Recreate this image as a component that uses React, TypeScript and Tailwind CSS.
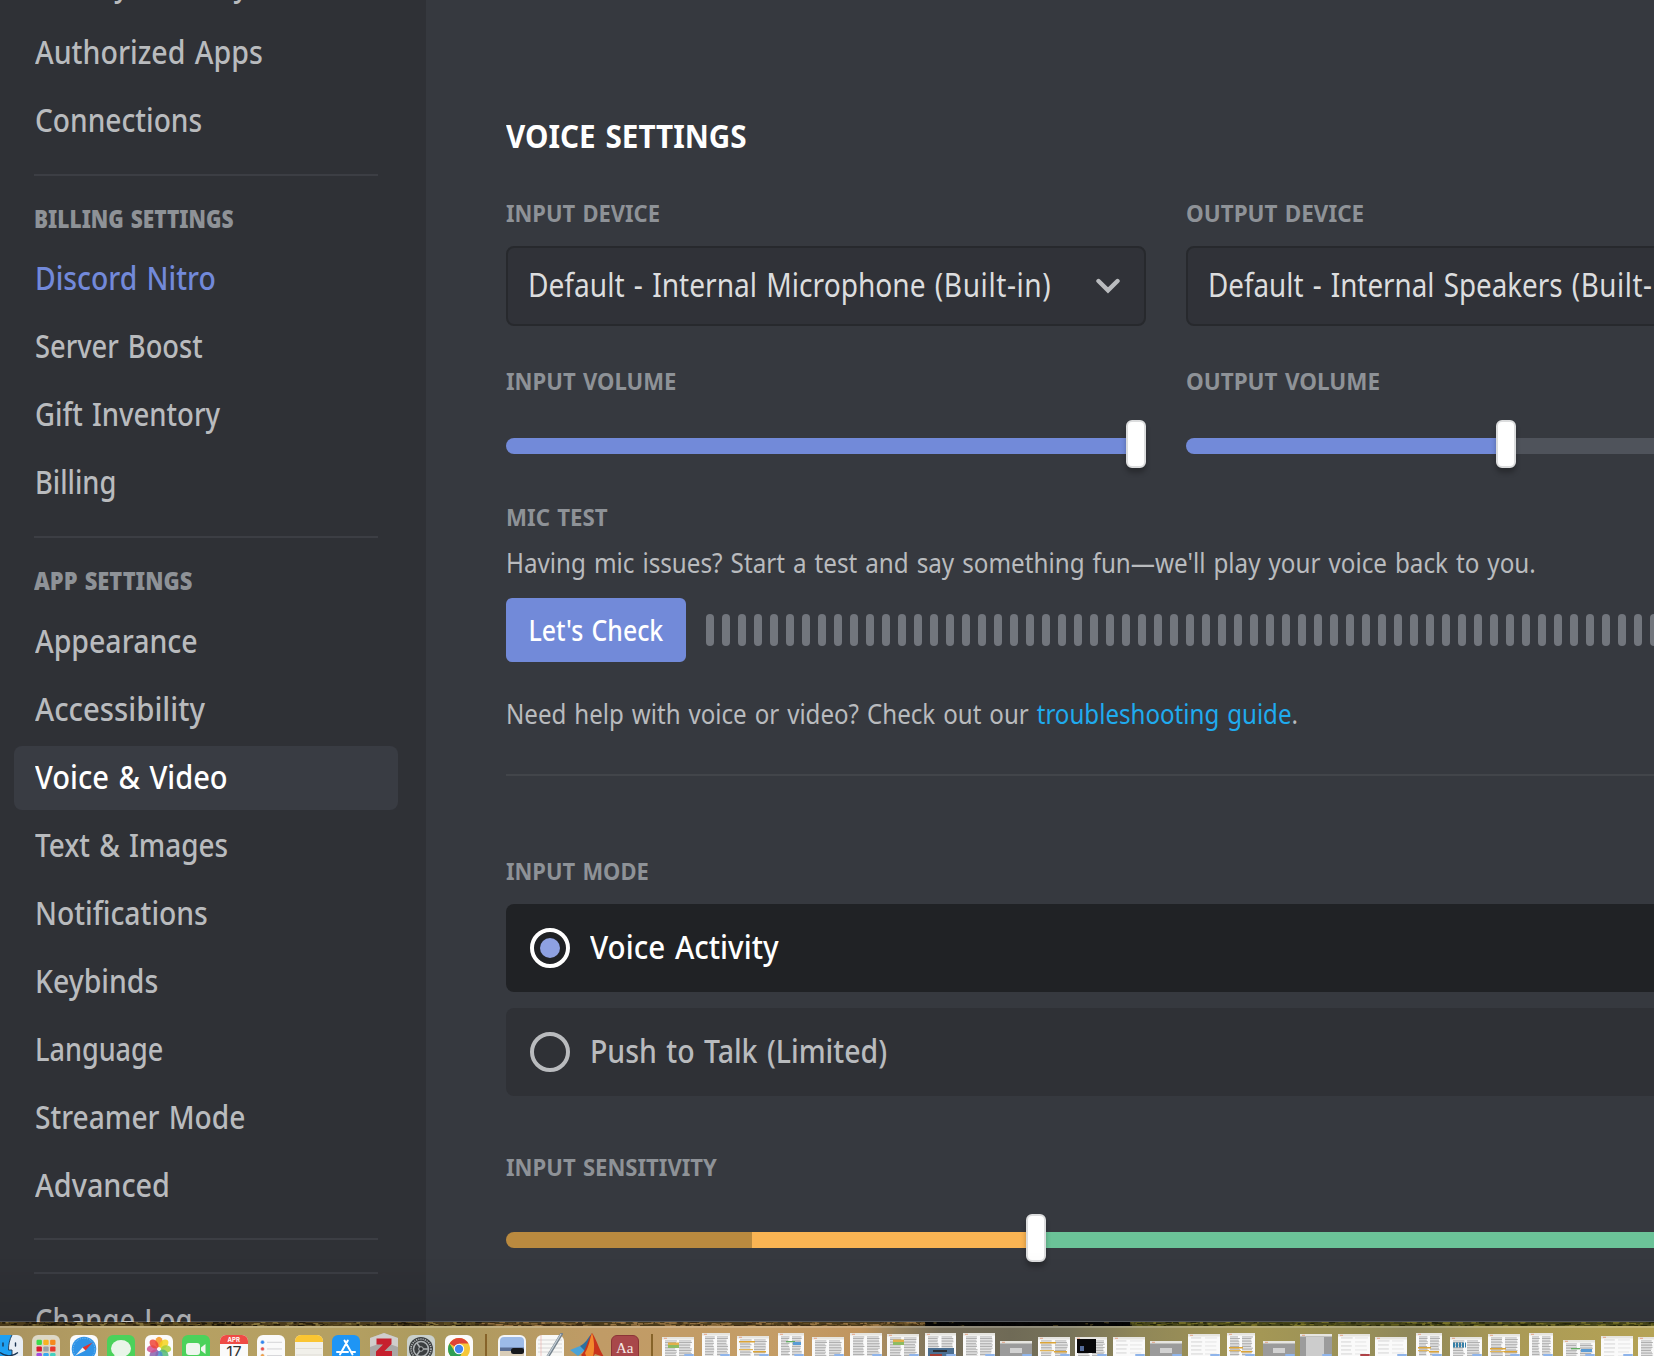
import { useLayoutEffect, useRef, useState, type ReactNode } from "react";

/* Text condensed horizontally so that its advance equals `width`. */
function Fit({ width, center, children }: { width: number; center?: boolean; children: ReactNode }) {
  const ref = useRef<HTMLSpanElement>(null);
  const [scale, setScale] = useState(0.9);
  useLayoutEffect(() => {
    if (ref.current) setScale(width / ref.current.offsetWidth);
  }, [width]);
  return (
    <span
      ref={ref}
      className={`inline-block whitespace-nowrap [word-spacing:0.07em] ${center ? "origin-center" : "origin-left"}`}
      style={{ transform: `scaleX(${scale})` }}
    >
      {children}
    </span>
  );
}

/* ---------- Sidebar ---------- */

function Item({ label, width, tone = "normal" }: { label: string; width: number; tone?: "normal" | "nitro" | "active" }) {
  const tones = {
    normal: "text-[#b9bbbe]",
    nitro: "text-[#7289da]",
    active: "bg-[#393c43] text-white",
  };
  return (
    <div className={`mb-1 flex h-16 w-[384px] shrink-0 items-center rounded-lg pb-[3px] pl-[20.5px] text-[32px] font-medium ${tones[tone]}`}>
      <Fit width={width}>{label}</Fit>
    </div>
  );
}

function Rule() {
  return <div className="ml-5 h-0.5 w-[344px] shrink-0 bg-[#3c3e44]" />;
}

function Sidebar() {
  return (
    <nav className="flex w-[426px] shrink-0 flex-col bg-[#2f3136] pl-[14px]">
      <div className="-mt-[47px] flex flex-col">
        <Item label="Privacy & Safety" width={213} />
        <Item label="Authorized Apps" width={227.5} />
        <Item label="Connections" width={167} />
      </div>
      <div className="mt-[17px]">
        <Rule />
      </div>
      <h2 className="flex h-[71px] shrink-0 items-center pt-[14px] pl-5 text-2xl font-black text-[#8e9297]">
        <Fit width={199.5}>BILLING SETTINGS</Fit>
      </h2>
      <Item label="Discord Nitro" width={180.5} tone="nitro" />
      <Item label="Server Boost" width={168} />
      <Item label="Gift Inventory" width={185} />
      <Item label="Billing" width={81} />
      <div className="mt-[17px]">
        <Rule />
      </div>
      <h2 className="flex h-[72px] shrink-0 items-center pt-[14px] pl-5 text-2xl font-black text-[#8e9297]">
        <Fit width={158.500}>APP SETTINGS</Fit>
      </h2>
      <Item label="Appearance" width={163} />
      <Item label="Accessibility" width={169.5} />
      <Item label="Voice & Video" width={192.5} tone="active" />
      <Item label="Text & Images" width={193.500} />
      <Item label="Notifications" width={172.500} />
      <Item label="Keybinds" width={123.5} />
      <Item label="Language" width={128.5} />
      <Item label="Streamer Mode" width={210} />
      <Item label="Advanced" width={135} />
      <div className="mt-4 flex flex-col gap-8">
        <Rule />
        <Rule />
      </div>
      <div className="mt-[15px]">
        <Item label="Change Log" width={157.500} />
      </div>
    </nav>
  );
}

/* ---------- Voice settings ---------- */

function Label({ width, children }: { width: number; children: string }) {
  return (
    <h3 className="flex h-8 items-center text-2xl font-bold text-[#8e9297]">
      <Fit width={width}>{children}</Fit>
    </h3>
  );
}

function Select({ device, width }: { device: string; width: number }) {
  return (
    <div className="mt-[17px] flex h-20 w-[640px] items-center rounded-lg border-2 border-[#27292d] bg-[#303238] pr-6 pb-[3px] pl-5 text-[32px] text-[#dcddde]">
      <div className="w-0 flex-1">
        <Fit width={width}>
          Default - Internal {device} <span className="tracking-[0.02em]">(Built-in)</span>
        </Fit>
      </div>
      <svg width="24" height="16" viewBox="0 0 24 16" className="mt-[2px] shrink-0">
        <path d="M2.5 3 L12 12.3 L21.5 3" fill="none" stroke="#b9bbbe" strokeWidth="4.4" strokeLinecap="round" />
      </svg>
    </div>
  );
}

function Thumb() {
  return <div className="z-10 h-12 w-5 shrink-0 rounded-md border-2 border-[#dcddde] bg-white shadow-[0_5px_5px_rgba(0,0,0,0.25)]" />;
}

function VolumeSlider({ full }: { full?: boolean }) {
  return (
    <div className="mt-[23px] flex h-12 w-[640px]">
      <div className={`mt-[18px] h-4 rounded-l-full bg-[#728ad9] ${full ? "w-[620px]" : "w-[310px]"}`} />
      <Thumb />
      {!full && <div className="mt-[18px] h-4 w-[310px] rounded-r-full bg-[#4f535b]" />}
    </div>
  );
}

function RadioRow({ label, width, active }: { label: string; width: number; active?: boolean }) {
  return (
    <div className={`flex h-[88px] w-[1320px] items-center gap-5 rounded-lg pl-6 ${active ? "bg-[#202225] text-white" : "bg-[#2f3136] text-[#b9bbbe]"}`}>
      <div className="flex size-10 items-center justify-center rounded-full border-4 border-current">
        {active && <div className="size-5 rounded-full bg-[#8ea1e1]" />}
      </div>
      <div className="pb-[3px] text-[32px] font-medium">
        <Fit width={width}>{label}</Fit>
      </div>
    </div>
  );
}

function Content() {
  return (
    <main className="flex min-w-0 flex-1 flex-col overflow-hidden bg-[#36393f] pt-[116px] pl-20">
      <h1 className="flex h-10 items-center text-[32px] font-bold text-white">
        <Fit width={241}>VOICE SETTINGS</Fit>
      </h1>
      <div className="mt-[41px] flex w-[1320px] gap-10">
        <section className="w-[640px]">
          <Label width={153.500}>INPUT DEVICE</Label>
          <Select device="Microphone" width={523.5} />
          <div className="mt-[39px]">
            <Label width={170}>INPUT VOLUME</Label>
          </div>
          <VolumeSlider full />
        </section>
        <section className="w-[640px]">
          <Label width={178.5}>OUTPUT DEVICE</Label>
          <Select device="Speakers" width={478.500} />
          <div className="mt-[39px]">
            <Label width={194.5}>OUTPUT VOLUME</Label>
          </div>
          <VolumeSlider />
        </section>
      </div>

      <div className="mt-[33px]">
        <Label width={102}>MIC TEST</Label>
      </div>
      <p className="mt-[9px] flex h-10 items-center pb-px text-[28px] text-[#b9bbbe]">
        <Fit width={1030}>Having mic issues? Start a test and say something fun—we'll play your voice back to you.</Fit>
      </p>
      <div className="mt-4 flex w-[1320px] items-center gap-5">
        <button className="flex h-16 w-[180px] shrink-0 items-center justify-center rounded-md bg-[#728ad9] text-[28px] font-medium text-white">
          <Fit width={135} center>
            Let's Check
          </Fit>
        </button>
        <div className="flex gap-2">
          {Array.from({ length: 64 }, (_, i) => (
            <div key={i} className="h-8 w-2 shrink-0 rounded-full bg-[#72767d]" />
          ))}
        </div>
      </div>
      <p className="mt-[31px] flex h-[41px] items-center pb-px text-[28px] text-[#b9bbbe]">
        <Fit width={792}>
          Need help with voice or video? Check out our <a className="text-[#1fabee]">troubleshooting guide</a>.
        </Fit>
      </p>
      <div className="mt-10 h-0.5 w-[1320px] bg-[#42454a]" />

      <div className="mt-[79px]">
        <Label width={142.5}>INPUT MODE</Label>
      </div>
      <div className="mt-[17px] flex flex-col gap-4">
        <RadioRow label="Voice Activity" width={188.5} active />
        <RadioRow label="Push to Talk (Limited)" width={297} />
      </div>

      <div className="mt-[55px]">
        <Label width={210.5}>INPUT SENSITIVITY</Label>
      </div>
      <div className="mt-[31px] flex h-12 w-[1320px]">
        <div className="mt-[18px] h-4 w-[246px] rounded-l-full bg-[#ba8a3f]" />
        <div className="mt-[18px] h-4 w-[274px] bg-[#fab453]" />
        <Thumb />
        <div className="mt-[18px] h-4 flex-1 rounded-r-full bg-[#6bc398]" />
      </div>
    </main>
  );
}

/* ---------- Wallpaper strip and dock ---------- */

function rng(seed: number) {
  let s = seed;
  return () => ((s = (s * 16807) % 2147483647) / 2147483647);
}

function Wallpaper() {
  const rand = rng(77);
  const patches = Array.from({ length: 900 }, (_, i) => {
    const x = rand() * 1654;
    const dark = x > 925 && x < 1130;
    const olive = x >= 1130;
    const palette = olive
      ? ["#5c5a1c", "#3a3a10", "#80792c", "#1f2008"]
      : x < 480
        ? ["#5b4c20", "#2a220e", "#8b7940", "#181205"]
        : ["#6b5228", "#8c6d3c", "#3a2812", "#a07c4a"];
    const c = dark ? (rand() > 0.06 ? "#050505" : "#4a4020") : palette[Math.floor(rand() * 4)];
    return <rect key={i} x={x} y={Math.floor(rand() * 4)} width={2 + rand() * 5} height={1 + rand()} fill={c} opacity="0.8" />;
  });
  return (
    <svg className="block h-1 w-full shrink-0" width="1654" height="4" viewBox="0 0 1654 4">
      <rect width="930" height="4" fill="#4a3a1a" />
      <rect x="925" width="205" height="4" fill="#060606" />
      <rect x="1130" width="524" height="4" fill="#45441a" />
      {patches}
    </svg>
  );
}

const APP = "block size-7 shrink-0 mt-[7px]";

function Tile({ fill }: { fill: string }) {
  return <rect width="28" height="28" rx="6" fill={fill} />;
}

function Apps() {
  const petals = ["#f6931e", "#f4d21f", "#a8cf38", "#52b878", "#4b8fd0", "#8a62ae", "#cf4f8e", "#ee4438"];
  const pads = ["#3ddc4c", "#f7b322", "#f58a1f", "#d9182d", "#9aa0a6", "#e8382f", "#a34be0", "#36a9f0", "#43d0c0"];
  return [
    <svg className={APP} viewBox="0 0 28 28">
      <Tile fill="#e8eef5" />
      <path d="M6 0H17C14.500 5 13.500 9 13.500 15H17V28H6A6 6 0 0 1 0 22V6A6 6 0 0 1 6 0Z" fill="#1ea0f2" />
      <path d="M17 0C14.500 5 13.500 9 13.500 15H17V20" fill="none" stroke="#1c3553" strokeWidth="0.900" />
      <path d="M8 8V11M20.500 8V11" stroke="#1c3553" strokeWidth="1.400" strokeLinecap="round" />
      <path d="M5 17.500Q14 24 23 17.500" fill="none" stroke="#1c3553" strokeWidth="1.200" />
    </svg>,
    <svg className={APP} viewBox="0 0 28 28">
      <Tile fill="#ddd8c6" />
      {pads.map((c, i) => (
        <rect key={i} x={4.5 + (i % 3) * 6.8} y={4.8 + Math.floor(i / 3) * 6.6} width="5.400" height="5.200" rx="1.200" fill={c} />
      ))}
    </svg>,
    <svg className={APP} viewBox="0 0 28 28">
      <Tile fill="#fbfbfb" />
      <circle cx="14" cy="14" r="12.300" fill="#2f93e6" />
      <circle cx="14" cy="14" r="10.800" fill="none" stroke="#a8d4f7" strokeWidth="1" strokeDasharray="0.500 1.300" />
      <path d="M22.500 7.500L15.500 15.500L12.500 12.500Z" fill="#e5322c" />
      <path d="M5.500 20.500L15.500 15.500L12.500 12.500Z" fill="#f4f4f4" />
    </svg>,
    <svg className={APP} viewBox="0 0 28 28">
      <Tile fill="#4bd25b" />
      <ellipse cx="14" cy="13.500" rx="10" ry="8.500" fill="#e9f5e9" />
      <path d="M8 19L6 24L12 21.500Z" fill="#e9f5e9" />
    </svg>,
    <svg className={APP} viewBox="0 0 28 28">
      <Tile fill="#fbfbfb" />
      {petals.map((c, i) => (
        <ellipse key={i} cx="14" cy="7" rx="3.700" ry="5.200" fill={c} opacity="0.850" transform={`rotate(${i * 45} 14 14)`} />
      ))}
    </svg>,
    <svg className={APP} viewBox="0 0 28 28">
      <Tile fill="#4bd25b" />
      <rect x="4" y="8" width="14" height="12" rx="3" fill="#eef7ee" />
      <path d="M19 12.500L23.500 9V19L19 15.500Z" fill="#eef7ee" />
    </svg>,
    <div className="mt-[7px] flex h-7 w-7 shrink-0 flex-col items-center overflow-hidden rounded-md bg-[#fafafa] font-['Inter']">
      <div className="h-[9px] w-full bg-[#ef4b45] text-center text-[6px] leading-[9px] font-bold text-white">APR</div>
      <div className="text-[16px] leading-[17px] tracking-tight text-[#333333]">17</div>
    </div>,
    <svg className={APP} viewBox="0 0 28 28">
      <Tile fill="#fafafa" />
      {["#2f86f0", "#e8504a", "#f0a04a"].map((c, i) => (
        <g key={c}>
          <circle cx="5.500" cy={7.2 + i * 6.7} r="1.900" fill={c} stroke="#dfe5ee" strokeWidth="0.500" />
          <rect x="10" y={6.8 + i * 6.7} width="15" height="0.900" fill="#cfcfd2" />
        </g>
      ))}
    </svg>,
    <svg className={APP} viewBox="0 0 28 28">
      <Tile fill="#f1f0ea" />
      <path d="M0 7V6A6 6 0 0 1 6 0H22A6 6 0 0 1 28 6V7Z" fill="#fac532" />
      <path d="M1 13.500H27M1 20H27" stroke="#d8d6ce" strokeWidth="0.700" />
    </svg>,
    <svg className={APP} viewBox="0 0 28 28">
      <Tile fill="#1e95f5" />
      <path d="M15.800 5.500L8 19.500M12.500 5.500L20.500 19.500M5 17H16M19.500 17H23" fill="none" stroke="#ffffff" strokeWidth="2" strokeLinecap="round" />
    </svg>,
    <svg className="mt-[5px] block h-[30px] w-7 shrink-0" viewBox="0 0 28 30">
      <path d="M14 0L28 5V25L14 30L0 25V5Z" fill="#aaa8a6" />
      <path d="M14 0L28 5V14L14 9L0 14V5Z" fill="#d0cecc" />
      <path d="M6.500 5.500H21.500V11L14.500 18H22V24H6V18.500L13 11.500H6.500Z" fill="#c6202e" />
    </svg>,
    <svg className={APP} viewBox="0 0 28 28">
      <Tile fill="#c9d0cc" />
      <circle cx="14" cy="14" r="12" fill="#3b3e40" />
      <circle cx="14" cy="14" r="10" fill="none" stroke="#b9bdbe" strokeWidth="1.500" strokeDasharray="1.200 1" />
      <circle cx="14" cy="14" r="7.500" fill="none" stroke="#aeb2b4" strokeWidth="1.500" />
      <path d="M14 14H21M14 14L10 8M14 14L10 20" stroke="#aeb2b4" strokeWidth="1.500" />
      <circle cx="14" cy="14" r="2.300" fill="#2b2d2f" stroke="#aeb2b4" />
    </svg>,
    <svg className={APP} viewBox="0 0 28 28">
      <Tile fill="#fbfbfb" />
      <circle cx="14" cy="14" r="11" fill="#f6c73a" />
      <path d="M14 14L4.500 8.500A11 11 0 0 1 23.500 8.500H14Z" fill="#df4437" />
      <path d="M4.500 8.500A11 11 0 0 0 13 25L17.500 17L9.500 16Z" fill="#2f9f55" />
      <circle cx="14" cy="14" r="5.200" fill="#ffffff" />
      <circle cx="14" cy="14" r="4.200" fill="#4285f0" />
    </svg>,
  ];
}

function MiddleApps() {
  return [
    <svg className={APP} viewBox="0 0 28 28">
      <Tile fill="#f4f6f8" />
      <rect x="2" y="2" width="24" height="24" rx="4" fill="#9dbbe8" />
      <rect x="2" y="12.500" width="24" height="4" fill="#5b6f96" />
      <rect x="2" y="16" width="24" height="8" fill="#d9cdb8" />
      <rect x="13" y="13" width="13" height="6" rx="2.500" fill="#16181c" />
    </svg>,
    <svg className="mt-[5px] block h-[30px] w-7 shrink-0" viewBox="0 0 28 30">
      <rect y="2" width="28" height="28" rx="6" fill="#f8f8f6" />
      <path d="M2 7H26M2 11H26M2 15H26M2 19H26" stroke="#c9c9c9" strokeWidth="0.700" />
      <path d="M5 2V28" stroke="#eaa9a4" strokeWidth="0.600" />
      <path d="M25.500 1L11 25" stroke="#75828c" strokeWidth="3" strokeLinecap="round" />
      <path d="M25 1L11 24" stroke="#c3ced6" strokeWidth="1.200" />
    </svg>,
    <svg className="mt-[5px] block h-[30px] w-[35px] shrink-0" viewBox="0 0 35 30">
      <path d="M0 17L10 13L15 17L8 23Z" fill="#4aa3d8" />
      <path d="M10 13C15 11 18 5 22 0L16 19Z" fill="#2e6f9e" />
      <path d="M22 0C25 3 29 16 34 24L25 21L19 30L11 22C16 18 18 6 22 0Z" fill="#c8341c" />
      <path d="M22 0C24 6 25 14 23 24L18 28L15 20C19 14 20 5 22 0Z" fill="#f28a2e" />
    </svg>,
    <div className="mt-[7px] flex h-7 w-7 shrink-0 justify-center rounded-md border border-[#8c3437] bg-[#a8474a] font-['Liberation_Serif'] text-[15px] leading-[24px] text-[#f6e9e6]">
      Aa
    </div>,
  ];
}

type DocKind = "text" | "mark" | "dark" | "black" | "photo" | "blank" | "green" | "grey" | "blue" | "red" | "figure";

/* [width, height visible above the dock's bottom edge, kind] */
const DOCS: [number, number, DocKind][] = [
  [32, 19, "green"], [28, 23, "text"], [32, 20, "mark"], [26, 23, "blue"], [32, 19, "text"], [32, 23, "text"],
  [32, 22, "green"], [31, 23, "photo"], [32, 23, "text"], [32, 15, "dark"], [32, 19, "mark"], [32, 19, "black"],
  [32, 19, "blank"], [32, 15, "dark"], [32, 22, "blank"], [28, 23, "mark"], [32, 15, "dark"], [32, 22, "grey"],
  [32, 22, "red"], [32, 19, "blank"], [26, 23, "mark"], [32, 19, "figure"], [32, 22, "mark"], [24, 23, "text"],
  [32, 16, "blue"], [32, 20, "blank"], [32, 19, "text"],
];

function Doc({ w, h, kind, seed }: { w: number; h: number; kind: DocKind; seed: number }) {
  const rand = rng(seed * 7919 + 13);
  const dark = kind === "dark" || kind === "grey";
  const sparse = kind === "blank" || kind === "red";
  const lines = [];
  if (!dark) {
    const step = sparse ? 4 : 1.6;
    for (let y = 3.5; y < h; y += step) {
      lines.push(<rect key={`l${y}`} x="3" y={y} width={w / 2 - 4 - rand() * 2} height="0.900" fill={sparse ? "#d0d0d0" : "#a8a8a8"} />);
      lines.push(<rect key={`r${y}`} x={w / 2 + 1} y={y} width={w / 2 - 3 - rand() * 2} height="0.900" fill={sparse ? "#e2e2e2" : "#a8a8a8"} />);
    }
  }
  return (
    <svg width={w} height={h} viewBox={`0 0 ${w} ${h}`} className="block shrink-0 overflow-visible">
      <rect width={w} height={h} fill={dark ? "#9b9b9b" : "#fafafa"} />
      {lines}
      <rect width={w} height="2.500" fill="#e6e5e0" />
      <path d="M2 1.300H5" stroke="#e59b7a" strokeWidth="0.900" />
      {kind === "dark" && <rect x="10" y="7" width="12" height="5" fill="#d2d2d2" />}
      {kind === "grey" && <rect x="6" y="3" width="18" height={h - 3} fill="#cccccc" />}
      {kind === "mark" && (
        <>
          <rect x="2" y={h > 21 ? 14 : 5} width={w / 2} height="1.500" fill="#dba437" />
          <rect x={w / 2} y={h - 5} width={w / 2 - 3} height="1.500" fill="#dba437" />
          <rect x="2" y={h > 21 ? 17 : 13} width={w / 2 - 2} height="1.200" fill="#e3b658" />
        </>
      )}
      {kind === "green" && (
        <>
          <rect x="6" y="5.500" width="11" height="2.500" fill="#e2b04a" />
          <rect x="6" y="8" width="11" height="3" fill="#8dbb62" />
        </>
      )}
      {kind === "blue" && (
        <>
          <rect x="8" y="8" width="9" height="1.300" fill="#62ad62" />
          <rect x={w / 2 + 2} y="9" width={w / 2 - 5} height="3" fill="#5a9bd5" />
        </>
      )}
      {kind === "black" && (
        <>
          <rect x="2" y="2" width="19" height="14" fill="#08080a" />
          <rect x="5" y="9" width="4" height="5" fill="#566c9a" />
        </>
      )}
      {kind === "photo" && (
        <>
          <rect x="3" y="15" width="26" height="8" fill="#4b6f92" />
          <rect x="8" y="17" width="14" height="2" fill="#2c2f35" />
          <rect x="5" y="21" width="12" height="2" fill="#a33b32" />
        </>
      )}
      {kind === "figure" && <path d="M3 8H16" stroke="#347fa8" strokeWidth="5" strokeDasharray="2 1" />}
      <rect x={w - 10} y={h - 2} width="10" height="2" rx="1" fill={kind === "red" ? "#ae4247" : "#8fb4ea"} />
    </svg>
  );
}

function Divider() {
  return (
    <div className="flex w-4 shrink-0 justify-center pt-1.5">
      <div className="h-full w-0.5 bg-[#866329]" />
    </div>
  );
}

function Cell({ children }: { children: ReactNode }) {
  return <div className="flex h-full w-[37.5px] shrink-0 justify-center">{children}</div>;
}

function Dock() {
  return (
    <div className="flex h-[30px] shrink-0 overflow-hidden border-t-2 border-white/20 bg-[linear-gradient(90deg,#a8925f_0px,#b6a063_120px,#b5a062_330px,#ab9a5e_440px,#c09b66_600px,#c49d66_770px,#c0955f_860px,#9b8660_895px,#786f5a_940px,#6f6a56_1010px,#78745a_1070px,#908758_1140px,#a49755_1260px,#9a9158_1350px,#8f885a_1410px,#aa9a56_1510px,#b5a355_1654px)]">
      <div className="-ml-[10px] flex">
        {Apps().map((a, i) => (
          <Cell key={i}>{a}</Cell>
        ))}
        <Divider />
        {MiddleApps().map((a, i) => (
          <Cell key={i}>{a}</Cell>
        ))}
        <Divider />
        {DOCS.map(([w, h, kind], i) => (
          <div key={i} className="flex h-full w-[37.54px] shrink-0 items-end justify-center">
            <Doc w={w} h={h} kind={kind} seed={i + 1} />
          </div>
        ))}
      </div>
    </div>
  );
}

export default function App() {
  return (
    <div className="flex h-[1356px] w-full flex-col overflow-hidden bg-[#36393f] font-['Noto_Sans',sans-serif]">
      <div className="relative flex h-[1322px] shrink-0 overflow-hidden">
        <Sidebar />
        <Content />
        <div className="pointer-events-none absolute inset-x-0 bottom-0 z-20 h-[70px] border-b border-white/15 bg-linear-to-b from-transparent to-black/10" />
      </div>
      <Wallpaper />
      <Dock />
    </div>
  );
}
